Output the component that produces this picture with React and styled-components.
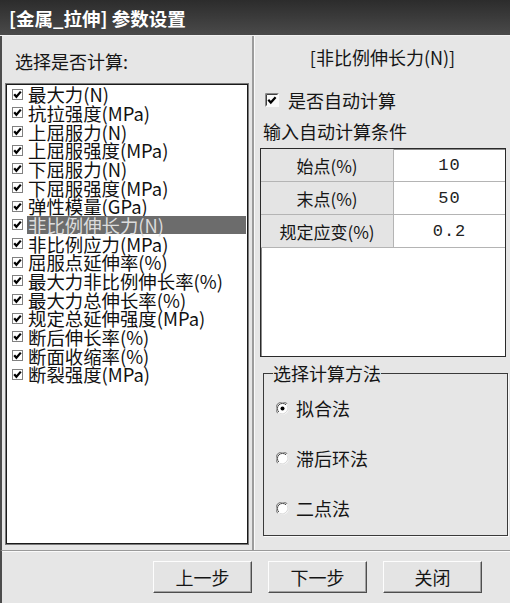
import styled, { createGlobalStyle } from "styled-components";

const GlobalStyle = createGlobalStyle`
  html, body {
    margin: 0;
    padding: 0;
    background: #e6e6e6;
  }
  body {
    font-family: "Noto Sans CJK SC", "Noto Sans", sans-serif;
    color: #151515;
  }
`;

const Window = styled.div`
  width: 510px;
  height: 603px;
  display: flex;
  flex-direction: column;
  background: #e6e6e6;
  overflow: hidden;
`;

const TitleBar = styled.div`
  flex: none;
  height: 36px;
  box-sizing: border-box;
  padding-left: 9px;
  background: linear-gradient(#2c2c2c, #4a4a4a);
  border-bottom: 1px solid #f2f2f2;
  color: #fff;
  font-weight: bold;
  font-size: 18.5px;
  line-height: 36px;
  white-space: pre;
`;

const Body = styled.div`
  flex: none;
  height: 514px;
  display: flex;
  border-left: 2px solid #4c4c4c;
`;

const LeftPane = styled.div`
  width: 250px;
  display: flex;
  flex-direction: column;
`;

const PaneLabel = styled.div`
  height: 47px;
  box-sizing: border-box;
  padding: 13px 0 0 13px;
  font-size: 18px;
  line-height: 24px;
`;

const ListBox = styled.div`
  margin-left: 3px;
  width: 244px;
  height: 462px;
  box-sizing: border-box;
  background: #fff;
  border: 1px solid #7a7a7a;
  box-shadow: inset 1px 1px 0 #1a1a1a, inset -1px -1px 0 #1a1a1a;
  padding: 1px 2px 0 2px;
  overflow: hidden;
`;

const ListItem = styled.div`
  display: flex;
  align-items: center;
  height: 18.67px;
  padding-left: 4px;
`;

const ItemText = styled.span`
  flex: 1;
  margin-left: 4px;
  padding-left: 1px;
  height: 18px;
  font-size: 18.4px;
  line-height: 18px;
  white-space: nowrap;
  background: ${(p) => (p.$active ? "#6c6c6c" : "transparent")};
  color: ${(p) => (p.$active ? "#dcdcdc" : "#111")};
`;

const Divider = styled.div`
  width: 2px;
  background: #9c9c9c;
  border-right: 1px solid #fafafa;
`;

const RightPane = styled.div`
  flex: 1;
  display: flex;
  flex-direction: column;
`;

const Heading = styled.div`
  height: 42px;
  line-height: 42px;
  text-align: center;
  font-size: 18px;
`;

const AutoRow = styled.label`
  height: 44px;
  display: flex;
  align-items: center;
  gap: 9px;
  padding-left: 10px;
  font-size: 18px;
`;

const SubLabel = styled.div`
  height: 26px;
  padding-left: 8px;
  font-size: 18px;
  line-height: 18px;
`;

const TableBox = styled.div`
  margin-left: 5px;
  width: 246px;
  height: 209px;
  box-sizing: border-box;
  background: #fff;
  border: 1px solid #2a2a2a;
  box-shadow: inset 1px 1px 0 #8a8a8a;
`;

const ParamGrid = styled.div`
  display: grid;
  grid-template-columns: 133px 1fr;
  grid-auto-rows: 33px;
`;

const KeyCell = styled.div`
  display: flex;
  align-items: center;
  justify-content: center;
  background: #e4e4e4;
  border-right: 1px solid #b4b4b4;
  border-bottom: 1px solid #b4b4b4;
  font-size: 17px;
`;

const ValueCell = styled.div`
  display: flex;
  align-items: center;
  justify-content: center;
  border-bottom: 1px solid #b4b4b4;
  font-family: "Liberation Mono", monospace;
  font-size: 17px;
  letter-spacing: 1px;
  color: #222;
`;

const MethodGroup = styled.fieldset`
  margin: 6px 0 0 8px;
  width: 245px;
  height: 173px;
  box-sizing: border-box;
  padding: 0;
  border: 1px solid #3a3a3a;
  box-shadow: 1px 1px 0 #fafafa;
`;

const Legend = styled.legend`
  margin-left: 9px;
  padding: 0;
  font-size: 18px;
  line-height: 20px;
`;

const RadioRow = styled.label`
  height: 50px;
  display: flex;
  align-items: center;
  gap: 7px;
  padding-left: 12px;
  font-size: 18px;
`;

const Footer = styled.div`
  flex: 1;
  display: flex;
  justify-content: flex-end;
  gap: 16px;
  padding: 10px 28px 0 0;
  border-top: 1px solid #9a9a9a;
  border-left: 2px solid #4c4c4c;
  box-shadow: inset 0 1px 0 #fafafa;
`;

const Button = styled.button`
  width: 99px;
  height: 32px;
  background: #e4e4e4;
  border: 1px solid;
  border-color: #fdfdfd #4e4e4e #4e4e4e #fdfdfd;
  box-shadow: inset -1px -1px 0 #a2a2a2;
  font-family: "Noto Sans CJK SC", sans-serif;
  font-size: 18px;
  color: #151515;
  padding: 0;
`;

const items = [
  "最大力(N)",
  "抗拉强度(MPa)",
  "上屈服力(N)",
  "上屈服强度(MPa)",
  "下屈服力(N)",
  "下屈服强度(MPa)",
  "弹性模量(GPa)",
  "非比例伸长力(N)",
  "非比例应力(MPa)",
  "屈服点延伸率(%)",
  "最大力非比例伸长率(%)",
  "最大力总伸长率(%)",
  "规定总延伸强度(MPa)",
  "断后伸长率(%)",
  "断面收缩率(%)",
  "断裂强度(MPa)",
];

const params = [
  ["始点(%)", "10"],
  ["末点(%)", "50"],
  ["规定应变(%)", "0.2"],
];

const methods = ["拟合法", "滞后环法", "二点法"];

function SmallCheck() {
  return (
    <svg width="11" height="11" viewBox="0 0 11 11">
      <rect x="0.5" y="0.5" width="10" height="10" fill="#fff" stroke="#808080" />
      <path d="M2.2 5.2 L4.4 7.8 L8.8 2.6" fill="none" stroke="#000" strokeWidth="2.2" />
    </svg>
  );
}

function BigCheck() {
  return (
    <svg width="14" height="14" viewBox="0 0 14 14">
      <rect x="0" y="0" width="14" height="14" fill="#fafafa" />
      <path d="M0.5 13.5 V0.5 H13.5" fill="none" stroke="#8a8a8a" />
      <path d="M1.5 12.5 V1.5 H12.5" fill="none" stroke="#404040" />
      <path d="M3.3 6.8 L5.8 9.6 L10.6 4.2" fill="none" stroke="#000" strokeWidth="2.2" />
    </svg>
  );
}

function Radio({ on }) {
  return (
    <svg width="13" height="13" viewBox="0 0 13 13">
      <circle cx="6.5" cy="6.5" r="6.2" fill="#fff" />
      <path d="M1.9 11.1 A6.2 6.2 0 0 1 11.1 1.9" fill="none" stroke="#8c8c8c" strokeWidth="1.2" />
      <path d="M2.9 10.1 A5 5 0 0 1 10.1 2.9" fill="none" stroke="#4a4a4a" />
      <path d="M11.6 3.5 A6.2 6.2 0 0 1 3.5 11.6" fill="none" stroke="#d4d4d4" />
      {on && <circle cx="6.5" cy="6.5" r="2" fill="#000" />}
    </svg>
  );
}

export default function App() {
  return (
    <Window>
      <GlobalStyle />
      <TitleBar>{"[金属_拉伸] 参数设置"}</TitleBar>
      <Body>
        <LeftPane>
          <PaneLabel>选择是否计算:</PaneLabel>
          <ListBox>
            {items.map((name, i) => (
              <ListItem key={name}>
                <SmallCheck />
                <ItemText $active={i === 7}>{name}</ItemText>
              </ListItem>
            ))}
          </ListBox>
        </LeftPane>
        <Divider />
        <RightPane>
          <Heading>[非比例伸长力(N)]</Heading>
          <AutoRow>
            <BigCheck />
            是否自动计算
          </AutoRow>
          <SubLabel>输入自动计算条件</SubLabel>
          <TableBox>
            <ParamGrid>
              {params.flatMap(([k, v]) => [
                <KeyCell key={k}>{k}</KeyCell>,
                <ValueCell key={k + "-v"}>{v}</ValueCell>,
              ])}
            </ParamGrid>
          </TableBox>
          <MethodGroup>
            <Legend>选择计算方法</Legend>
            {methods.map((m, i) => (
              <RadioRow key={m}>
                <Radio on={i === 0} />
                {m}
              </RadioRow>
            ))}
          </MethodGroup>
        </RightPane>
      </Body>
      <Footer>
        <Button>上一步</Button>
        <Button>下一步</Button>
        <Button>关闭</Button>
      </Footer>
    </Window>
  );
}
